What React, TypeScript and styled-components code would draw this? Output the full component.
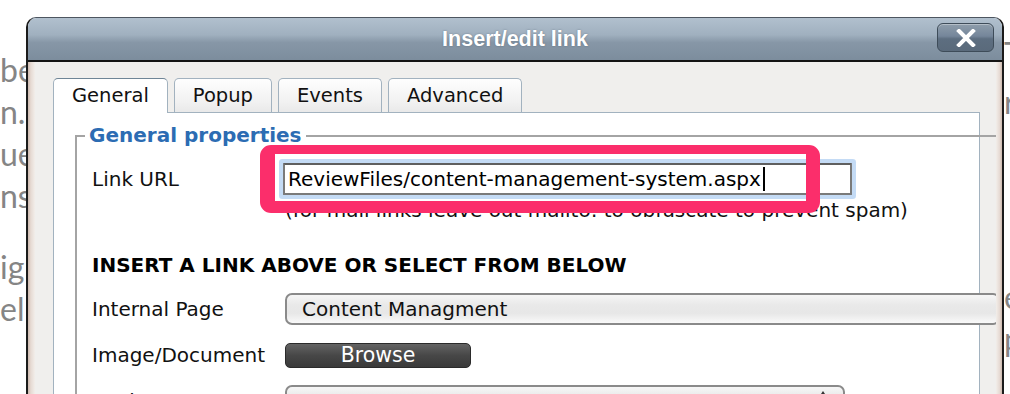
import styled, { createGlobalStyle } from "styled-components";

const GlobalStyle = createGlobalStyle`
  html, body {
    margin: 0;
    padding: 0;
    height: 394px;
    overflow: hidden;
    background: #fff;
  }
  body {
    font-family: "DejaVu Sans", Verdana, sans-serif;
    color: #111;
  }
`;

const Page = styled.div`
  position: relative;
  width: 1010px;
  height: 394px;
  overflow: hidden;
  display: flex;
  justify-content: space-between;
  background: #fff;
`;

const BackText = styled.div<{ $width: number }>`
  flex: none;
  width: ${(p) => p.$width}px;
  font-family: Lato, "Open Sans", sans-serif;
  font-weight: 400;
  font-size: 32px;
  color: #858585;
`;

const Para = styled.div<{ $top: number; $lineHeight?: number }>`
  margin-top: ${(p) => p.$top}px;
  line-height: ${(p) => p.$lineHeight ?? 42}px;
`;

const BackLine = styled.div`
  display: flex;
  white-space: nowrap;
`;

const Cut = styled.span`
  flex: none;
  width: 0;
  display: flex;
  justify-content: flex-end;
`;

const Window = styled.section`
  position: absolute;
  left: 26px;
  top: 17px;
  width: 978px;
  height: 400px;
  box-sizing: border-box;
  display: flex;
  flex-direction: column;
  border: 2px solid #1b1b1b;
  border-top: 1px solid #4d5660;
  border-radius: 10px 10px 0 0;
  overflow: hidden;
`;

const TitleBar = styled.header`
  flex: none;
  height: 42px;
  display: grid;
  grid-template-columns: 1fr auto 1fr;
  align-items: center;
  background: linear-gradient(#b1c0ce 0%, #a0b0bf 40%, #8797a7 58%, #7c8d9d 100%);
  border-bottom: 2px solid #141414;
`;

const Title = styled.h1`
  grid-column: 2;
  margin: 0;
  font-family: "Liberation Sans", Arial, sans-serif;
  font-weight: 700;
  font-size: 21.5px;
  color: #fff;
  text-shadow: 0 0 2px rgba(60, 75, 90, 0.5);
`;

const CloseButton = styled.button`
  grid-column: 3;
  justify-self: end;
  align-self: start;
  margin: 5px 8px 0 0;
  width: 57px;
  height: 29px;
  padding: 0;
  display: flex;
  align-items: center;
  justify-content: center;
  border: 1px solid #3e4c59;
  border-radius: 6px;
  background: linear-gradient(#8e9dab 0%, #75869a 45%, #5d6e80 55%, #5a6a7b 100%);
  box-shadow: inset 0 1px 0 rgba(255, 255, 255, 0.35);
`;

const Body = styled.div`
  flex: 1;
  display: flex;
  min-height: 0;
`;

const Frame = styled.div<{ $side: "left" | "right" }>`
  flex: none;
  width: ${(p) => (p.$side === "left" ? 7 : 6)}px;
  background: linear-gradient(
    to ${(p) => (p.$side === "left" ? "right" : "left")},
    #cdb9ae 0%,
    #e6dad3 40%,
    #f2eeea 100%
  );
`;

const Content = styled.div`
  flex: 1;
  min-width: 0;
  display: flex;
  flex-direction: column;
  padding: 16px 0 0 18px;
  background: #f0efed;
  overflow: hidden;
`;

const Tabs = styled.nav`
  flex: none;
  display: flex;
  align-items: flex-end;
  gap: 6px;
  height: 34px;
`;

const Tab = styled.div<{ $active?: boolean }>`
  box-sizing: border-box;
  height: ${(p) => (p.$active ? 35 : 34)}px;
  margin-bottom: ${(p) => (p.$active ? -1 : 0)}px;
  padding: 0 18px 1px;
  display: flex;
  align-items: center;
  font-size: 19.5px;
  color: #111;
  border: 1px solid #a2b2bf;
  border-top-color: ${(p) => (p.$active ? "#6f8596" : "#a2b2bf")};
  border-bottom: none;
  border-radius: 5px 5px 0 0;
  background: ${(p) => (p.$active ? "#fff" : "linear-gradient(#fefefe, #f1f1f1 70%, #e9e9e9)")};
  position: relative;
  z-index: ${(p) => (p.$active ? 1 : 0)};
`;

const Panel = styled.div`
  flex: 1;
  width: 927px;
  box-sizing: border-box;
  padding: 11px 0 0 21px;
  background: #fff;
  border: 1px solid #a2b2bf;
  border-bottom: none;
`;

const Fieldset = styled.fieldset`
  margin: 0;
  padding: 0 0 30px;
  width: 1000px;
  min-width: 0;
  box-sizing: border-box;
  border: 2px solid #a4a4a4;
`;

const Legend = styled.legend`
  margin-left: 8px;
  padding: 0 4px;
  font-weight: 700;
  font-size: 20px;
  line-height: 23px;
  color: #2c6cb3;
`;

const Form = styled.div`
  padding: 16px 0 0 15px;
`;

const Row = styled.div<{ $gap?: number }>`
  display: grid;
  grid-template-columns: 193px auto;
  align-items: center;
  height: 32px;
  margin-top: ${(p) => p.$gap ?? 0}px;
`;

const Label = styled.label`
  font-size: 20px;
  color: #111;
`;

const UrlField = styled.div`
  margin-left: -2px;
  width: 569px;
  height: 32px;
  box-sizing: border-box;
  display: flex;
  align-items: center;
  padding: 0 3px;
  border: 2px solid #7a7a7a;
  border-top-color: #5f5f5f;
  border-radius: 1px;
  background: #fff;
  box-shadow: 0 0 0 4px #c4dbf5;
  font-size: 20px;
  color: #000;
  white-space: nowrap;
`;

const Caret = styled.span`
  display: inline-block;
  width: 2px;
  height: 24px;
  margin-left: 2px;
  background: #000;
`;

const Help = styled.div`
  margin: 4px 0 0 193px;
  font-size: 20px;
  line-height: 22px;
  color: #111;
  white-space: nowrap;
`;

const Heading = styled.h2`
  margin: 32px 0 0;
  font-size: 20px;
  line-height: 24px;
  font-weight: 700;
  color: #000;
`;

const Select = styled.div<{ $width: number }>`
  position: relative;
  width: ${(p) => p.$width}px;
  height: 32px;
  box-sizing: border-box;
  display: flex;
  align-items: center;
  padding-left: 15px;
  border: 2px solid #8a8a8a;
  border-radius: 7px;
  background: linear-gradient(#f6f6f6 0%, #e9e9e9 35%, #e7e7e7 65%, #f9f9f9 100%);
  font-size: 20px;
  color: #111;
`;

const Arrow = styled.span`
  position: absolute;
  right: 16px;
  top: 4px;
  width: 0;
  height: 0;
  border-left: 4px solid transparent;
  border-right: 4px solid transparent;
  border-bottom: 6px solid #333;
`;

const Browse = styled.button`
  width: 186px;
  height: 25px;
  padding: 0;
  border: 1px solid #2b2b2b;
  border-radius: 5px;
  background: linear-gradient(#646464, #474747 50%, #3a3a3a);
  font-family: "DejaVu Sans", Verdana, sans-serif;
  font-size: 20.5px;
  line-height: 23px;
  color: #fff;
`;

const Annotation = styled.div`
  position: absolute;
  left: 260px;
  top: 145px;
  width: 560px;
  height: 68px;
  box-sizing: border-box;
  border-style: solid;
  border-color: #fb2e6b;
  border-width: 9px 14px 12px 15px;
  border-radius: 11px;
  pointer-events: none;
`;

const leftParas: { top: number; lines: [string, string][] }[] = [
  {
    top: 49,
    lines: [
      ["content will ", "be easily managed"],
      ["by the web team and the organisatio", "n."],
      ["Uniq", "ue features of the system"],
      ["include custom functio", "ns and"],
    ],
  },
  {
    top: 29,
    lines: [
      ["Des", "igned to"],
      ["mod", "el the"],
    ],
  },
];

export default function App() {
  return (
    <Page>
      <GlobalStyle />
      <BackText $width={40}>
        {leftParas.map((para, i) => (
          <Para key={i} $top={para.top}>
            {para.lines.map(([before, after]) => (
              <BackLine key={after}>
                <Cut>
                  <span>{before}</span>
                </Cut>
                <span>{after}</span>
              </BackLine>
            ))}
          </Para>
        ))}
      </BackText>

      <BackText $width={6}>
        <Para $top={30} $lineHeight={48}>
          <BackLine>Te</BackLine>
          <BackLine>re</BackLine>
        </Para>
        <Para $top={150}>
          <BackLine>ex</BackLine>
          <BackLine>pl</BackLine>
        </Para>
      </BackText>

      <Window>
        <TitleBar>
          <Title>Insert/edit link</Title>
          <CloseButton aria-label="Close">
            <svg width="20" height="18" viewBox="0 0 20 18">
              <path d="M3 2 L17 16 M17 2 L3 16" stroke="#fff" strokeWidth="4" strokeLinecap="square" />
            </svg>
          </CloseButton>
        </TitleBar>
        <Body>
          <Frame $side="left" />
          <Content>
            <Tabs>
              <Tab $active>General</Tab>
              <Tab>Popup</Tab>
              <Tab>Events</Tab>
              <Tab>Advanced</Tab>
            </Tabs>
            <Panel>
              <Fieldset>
                <Legend>General properties</Legend>
                <Form>
                  <Row>
                    <Label>Link URL</Label>
                    <UrlField>
                      ReviewFiles/content-management-system.aspx
                      <Caret />
                    </UrlField>
                  </Row>
                  <Help>(for mail links leave out mailto: to obfuscate to prevent spam)</Help>
                  <Heading>INSERT A LINK ABOVE OR SELECT FROM BELOW</Heading>
                  <Row $gap={16}>
                    <Label>Internal Page</Label>
                    <Select $width={715}>Content Managment</Select>
                  </Row>
                  <Row $gap={14}>
                    <Label>Image/Document</Label>
                    <div>
                      <Browse>Browse</Browse>
                    </div>
                  </Row>
                  <Row $gap={14}>
                    <Label>Anchors</Label>
                    <Select $width={560}>
                      <Arrow />
                    </Select>
                  </Row>
                </Form>
              </Fieldset>
            </Panel>
          </Content>
          <Frame $side="right" />
        </Body>
      </Window>

      <Annotation />
    </Page>
  );
}
